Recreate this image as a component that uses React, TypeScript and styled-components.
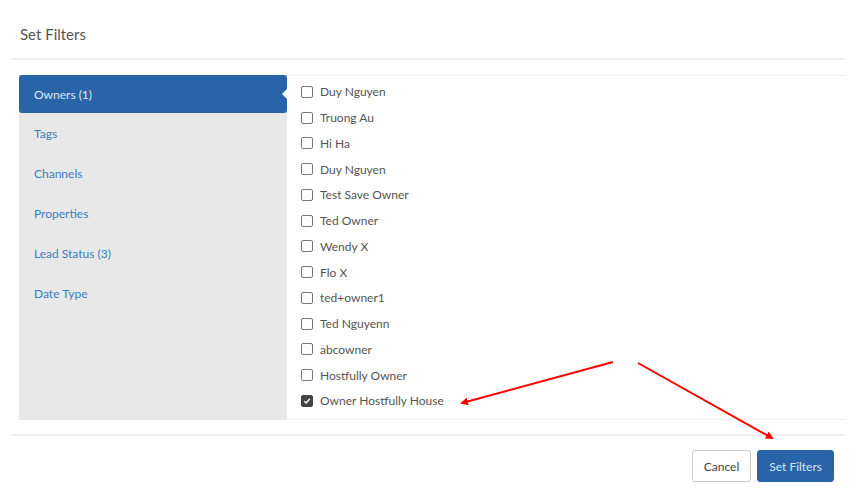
import React from 'react';
import styled, { createGlobalStyle } from 'styled-components';

const GlobalStyle = createGlobalStyle`
  body {
    margin: 0;
    background: #fff;
    font-family: Lato, 'Open Sans', sans-serif;
  }
`;

const Page = styled.div`
  position: relative;
  width: 856px;
  height: 503px;
  padding: 0 10px;
  box-sizing: border-box;
`;

const Header = styled.div`
  height: 60px;
  display: flex;
  align-items: center;
  padding: 10px 10px 0;
  box-sizing: border-box;
  border-bottom: 2px solid #efefef;

  & h2 {
    margin: 0;
    font-size: 15px;
    font-weight: 400;
    color: #555;
  }
`;

const Body = styled.div`
  display: flex;
  padding: 15px 0 14px 9px;
  height: 345px;
`;

const Sidebar = styled.div`
  width: 268px;
  flex-shrink: 0;
  background: #e8e8e8;
  display: flex;
  flex-direction: column;
`;

const Tab = styled.div<{ $active?: boolean }>`
  position: relative;
  display: flex;
  align-items: center;
  padding-left: 15px;
  font-size: 12px;
  color: ${(p) => (p.$active ? '#dfe8f3' : '#3d7cc0')};
  background: ${(p) => (p.$active ? '#2a64a8' : 'transparent')};
  border-radius: ${(p) => (p.$active ? '3px' : '0')};
  height: ${(p) => (p.$active ? '38px' : '40px')};

  &::after {
    content: '';
    display: ${(p) => (p.$active ? 'block' : 'none')};
    position: absolute;
    right: 0;
    top: 50%;
    margin-top: -5px;
    border-style: solid;
    border-width: 5px 5px 5px 0;
    border-color: transparent #fff transparent transparent;
  }
`;

const List = styled.div`
  flex: 1;
  border-top: 1px solid #eee;
  border-bottom: 1px solid #eee;
  padding: 3px 0 0 14px;
  display: flex;
  flex-direction: column;
`;

const Row = styled.label`
  height: 25.75px;
  display: flex;
  align-items: center;
  gap: 7px;
  font-size: 12px;
  color: #555;
`;

const Box = styled.span<{ $checked?: boolean }>`
  width: 10px;
  height: 10px;
  border: 1px solid ${(p) => (p.$checked ? '#444' : '#777')};
  border-radius: 2px;
  background: ${(p) => (p.$checked ? '#444' : '#fff')};
  display: flex;
  align-items: center;
  justify-content: center;
`;

const Footer = styled.div`
  border-top: 2px solid #efefef;
  display: flex;
  justify-content: flex-end;
  gap: 6px;
  padding: 14px 12px 0 0;
`;

const Button = styled.button<{ $primary?: boolean }>`
  height: 32px;
  padding: 0 11px;
  font-family: Lato, 'Open Sans', sans-serif;
  font-size: 12px;
  border-radius: 3px;
  border: 1px solid ${(p) => (p.$primary ? '#2a64a8' : '#ccc')};
  background: ${(p) => (p.$primary ? '#2a64a8' : '#fff')};
  color: ${(p) => (p.$primary ? '#dbe5f1' : '#444')};
`;

const Arrows = styled.svg`
  position: absolute;
  left: 0;
  top: 0;
  pointer-events: none;
`;

const tabs = ['Owners (1)', 'Tags', 'Channels', 'Properties', 'Lead Status (3)', 'Date Type'];

const owners = [
  'Duy Nguyen',
  'Truong Au',
  'Hi Ha',
  'Duy Nguyen',
  'Test Save Owner',
  'Ted Owner',
  'Wendy X',
  'Flo X',
  'ted+owner1',
  'Ted Nguyenn',
  'abcowner',
  'Hostfully Owner',
  'Owner Hostfully House',
];

const App = () => {
  return (
    <>
      <GlobalStyle />
      <Page>
        <Header>
          <h2>Set Filters</h2>
        </Header>
        <Body>
          <Sidebar>
            {tabs.map((t, i) => (
              <Tab key={t} $active={i === 0}>
                {t}
              </Tab>
            ))}
          </Sidebar>
          <List>
            {owners.map((name, i) => {
              const checked = i === owners.length - 1;
              return (
                <Row key={i}>
                  <Box $checked={checked}>
                    {checked && (
                      <svg width="8" height="8" viewBox="0 0 8 8">
                        <path d="M1.3 4.2 L3.2 6 L6.8 1.8" fill="none" stroke="#fff" strokeWidth="1.5" />
                      </svg>
                    )}
                  </Box>
                  {name}
                </Row>
              );
            })}
          </List>
        </Body>
        <Footer>
          <Button>Cancel</Button>
          <Button $primary>Set Filters</Button>
        </Footer>
        <Arrows width="856" height="503">
          <defs>
            <marker id="head" markerWidth="8" markerHeight="8" refX="6" refY="4" orient="auto" markerUnits="userSpaceOnUse">
              <path d="M0 0 L8 4 L0 8 Z" fill="#f00" />
            </marker>
          </defs>
          <line x1="613" y1="362" x2="462" y2="403" stroke="#f00" strokeWidth="2" markerEnd="url(#head)" />
          <line x1="638" y1="363" x2="772" y2="438" stroke="#f00" strokeWidth="2" markerEnd="url(#head)" />
        </Arrows>
      </Page>
    </>
  );
};

export default App;
